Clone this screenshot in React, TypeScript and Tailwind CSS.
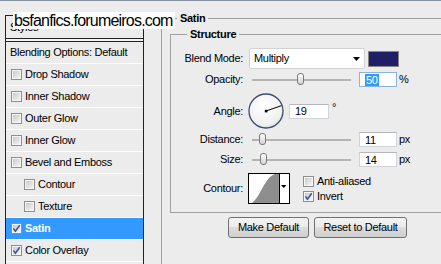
import React from "react";

const F = "font-['Liberation_Sans',Arial,sans-serif]";

function Check({ checked }: { checked?: boolean }) {
  return (
    <svg width="11" height="11" viewBox="0 0 11 11" className="block shrink-0">
      <defs>
        <linearGradient id="cbg" x1="0" y1="0" x2="1" y2="1">
          <stop offset="0" stopColor="#c9c9c9" />
          <stop offset="1" stopColor="#f4f4f4" />
        </linearGradient>
      </defs>
      <rect x="0.5" y="0.5" width="10" height="10" fill="#f6f6f6" stroke="#8e8f8f" />
      <rect x="2" y="2" width="7" height="7" fill="url(#cbg)" />
      {checked && (
        <path d="M2.4 5.4 L4.4 8.3 L8.7 2.2" fill="none" stroke="#3b4f9e" strokeWidth="1.5" />
      )}
    </svg>
  );
}

function Slider({ thumb }: { thumb: string }) {
  return (
    <div className="relative w-[110px] h-[15px] shrink-0">
      <div className="absolute left-[3px] top-[7px] w-[99px] h-[2px] bg-[#b4b4b4]" />
      <div
        className={`absolute top-[1px] ${thumb} h-[12px] w-[7px] rounded-[3px] border border-[#7a7a7a] bg-[linear-gradient(#ffffff,#d2d2d2)]`}
      />
    </div>
  );
}

function Field({ children, wide, focus }: { children: React.ReactNode; wide?: boolean; focus?: boolean }) {
  return (
    <div
      className={`${wide ? "w-[40px]" : "w-[38px]"} h-[15px] shrink-0 bg-white border flex items-center pl-[5px] leading-[12px] ${
        focus ? "border-[#8ab4de]" : "border-[#d0d3d8] border-t-[#b4b7bd]"
      }`}
    >
      {children}
    </div>
  );
}

function Label({ children }: { children: React.ReactNode }) {
  return <div className="w-[72px] shrink-0 text-right">{children}</div>;
}

const rows: { label: string; indent?: boolean; checked?: boolean; active?: boolean }[] = [
  { label: "Drop Shadow" },
  { label: "Inner Shadow" },
  { label: "Outer Glow" },
  { label: "Inner Glow" },
  { label: "Bevel and Emboss" },
  { label: "Contour", indent: true },
  { label: "Texture", indent: true },
  { label: "Satin", checked: true, active: true },
  { label: "Color Overlay", checked: true },
];

export default function App() {
  return (
    <div
      className={`${F} relative flex w-[441px] h-[264px] overflow-hidden bg-[#ececec] border-t border-[#8592a0] text-[11px] tracking-[-0.3px] text-black`}
    >
      {/* Left styles list */}
      <div className="w-[161px] shrink-0 pl-[5px] pt-[14px]">
        <div className="w-[139px] h-[300px] border border-[#222]">
          <div className="h-[22px] flex items-center pl-[4px]">Styles</div>
          <div className="h-[4px] border-y border-[#222] bg-[#f2f2f2]" />
          <div className="h-[22px] border-b border-white flex items-center pl-[4px]">Blending Options: Default</div>
          {rows.map((r) => (
            <div
              key={r.label}
              className={`h-[22px] border-b border-white flex items-center gap-[3px] ${r.indent ? "pl-[18px]" : "pl-[5px]"} ${
                r.active ? "bg-[#3399ff] text-white font-bold" : ""
              }`}
            >
              <Check checked={r.checked} />
              <span>{r.label}</span>
            </div>
          ))}
        </div>
      </div>

      {/* Right panel */}
      <div className="flex-1 flex flex-col pt-[17px]">
        <div className="flex-1 border-l border-[#a0a0a0] flex flex-col">
          {/* Satin legend */}
          <div className="-mt-[6px] h-[12px] flex items-center">
            <div className="w-[15px] h-px bg-[#a0a0a0]" />
            <span className="px-[3px] font-bold leading-[12px]">Satin</span>
            <div className="flex-1 h-px bg-[#a0a0a0]" />
          </div>

          {/* Structure group */}
          <div className="ml-[8px] mt-[10px] border-l border-b border-[#a0a0a0] pb-[8px]">
            <div className="-mt-[6px] h-[12px] flex items-center">
              <div className="w-[16px] h-px bg-[#a0a0a0]" />
              <span className="px-[3px] font-bold leading-[12px]">Structure</span>
              <div className="flex-1 h-px bg-[#a0a0a0]" />
            </div>

            <div className="mt-[8px] flex flex-col">
              {/* Blend mode */}
              <div className="h-[21px] flex items-center gap-[6px]">
                <Label>Blend Mode:</Label>
                <div className="w-[116px] h-[21px] shrink-0 bg-white border border-[#d2d2d2] rounded-[2px] flex items-center justify-between pl-[4px] pr-[4px]">
                  <span>Multiply</span>
                  <svg width="7" height="4" viewBox="0 0 7 4" className="block">
                    <path d="M0 0 H7 L3.5 4 Z" fill="#000" />
                  </svg>
                </div>
                <div className="-ml-[3px] w-[31px] h-[16px] shrink-0 bg-[#201f66] border border-[#858585]" />
              </div>

              {/* Opacity */}
              <div className="mt-[3px] h-[15px] flex items-center gap-[6px]">
                <Label>Opacity:</Label>
                <div className="flex items-center">
                  <Slider thumb="left-[48px]" />
                  <Field focus>
                    <span className="bg-[#3399ff] text-white px-px">50</span>
                  </Field>
                  <span className="ml-[2px]">%</span>
                </div>
              </div>

              {/* Angle */}
              <div className="mt-[6px] h-[36px] flex items-center gap-[6px]">
                <Label>Angle:</Label>
                <div className="flex items-center">
                  <svg width="36" height="36" viewBox="0 0 36 36" className="block -ml-px shrink-0">
                    <defs>
                      <radialGradient id="dial" cx="0.45" cy="0.35" r="0.75">
                        <stop offset="0" stopColor="#ffffff" />
                        <stop offset="0.7" stopColor="#f1f1f1" />
                        <stop offset="1" stopColor="#d6d6d6" />
                      </radialGradient>
                    </defs>
                    <circle cx="18" cy="18" r="17" fill="url(#dial)" stroke="#3e4c70" strokeWidth="1.3" />
                    <line x1="18" y1="18" x2="33.6" y2="12.6" stroke="#000" strokeWidth="1" />
                    <rect x="16.8" y="16.8" width="2.6" height="2.6" fill="#000" />
                  </svg>
                  <div className="ml-[5px]">
                    <Field wide>19</Field>
                  </div>
                  <span className="ml-[3px] mb-[8px]">°</span>
                </div>
              </div>

              {/* Distance */}
              <div className="mt-[3px] h-[15px] flex items-center gap-[6px]">
                <Label>Distance:</Label>
                <div className="flex items-center">
                  <Slider thumb="left-[10px]" />
                  <Field>11</Field>
                  <span className="ml-[2px]">px</span>
                </div>
              </div>

              {/* Size */}
              <div className="mt-[5px] h-[15px] flex items-center gap-[6px]">
                <Label>Size:</Label>
                <div className="flex items-center">
                  <Slider thumb="left-[11px]" />
                  <Field>14</Field>
                  <span className="ml-[2px]">px</span>
                </div>
              </div>

              {/* Contour */}
              <div className="mt-[6px] h-[31px] flex items-center gap-[6px]">
                <Label>Contour:</Label>
                <div className="flex items-center">
                  <svg width="42" height="31" viewBox="0 0 42 31" className="block -ml-px shrink-0">
                    <rect x="0.5" y="0.5" width="41" height="30" fill="#ffffff" stroke="#000" />
                    <path d="M4 30 C 9 26, 12 19, 15 14 C 18 9, 21 3, 27 1 L 31 1 L 31 30 Z" fill="#8e8e8e" />
                    <line x1="31.5" y1="1" x2="31.5" y2="30" stroke="#000" />
                    <path d="M33 12 H38.5 L35.75 15 Z" fill="#000" />
                  </svg>
                  <div className="ml-[13px] flex flex-col gap-[4px]">
                    <div className="flex items-center gap-[3px] leading-[11px]">
                      <Check />
                      <span>Anti-aliased</span>
                    </div>
                    <div className="flex items-center gap-[3px] leading-[11px]">
                      <Check checked />
                      <span>Invert</span>
                    </div>
                  </div>
                </div>
              </div>
            </div>
          </div>

          {/* Buttons */}
          <div className="mt-[4px] pl-[66px] flex gap-[5px]">
            <button className="w-[81px] h-[21px] rounded-[3px] border border-[#707070] bg-[linear-gradient(#f3f3f3,#ebebeb_50%,#dddddd_50%,#cfcfcf)] flex items-center justify-center">
              Make Default
            </button>
            <button className="w-[93px] h-[21px] rounded-[3px] border border-[#707070] bg-[linear-gradient(#f3f3f3,#ebebeb_50%,#dddddd_50%,#cfcfcf)] flex items-center justify-center">
              Reset to Default
            </button>
          </div>
        </div>
      </div>

      {/* Watermark overlay */}
      <div className="absolute left-[13px] top-[11px] w-[162px] h-[17px] bg-white pl-[1px] text-[16px] leading-[17px] tracking-[-0.8px] font-normal">
        bsfanfics.forumeiros.com
      </div>
    </div>
  );
}
